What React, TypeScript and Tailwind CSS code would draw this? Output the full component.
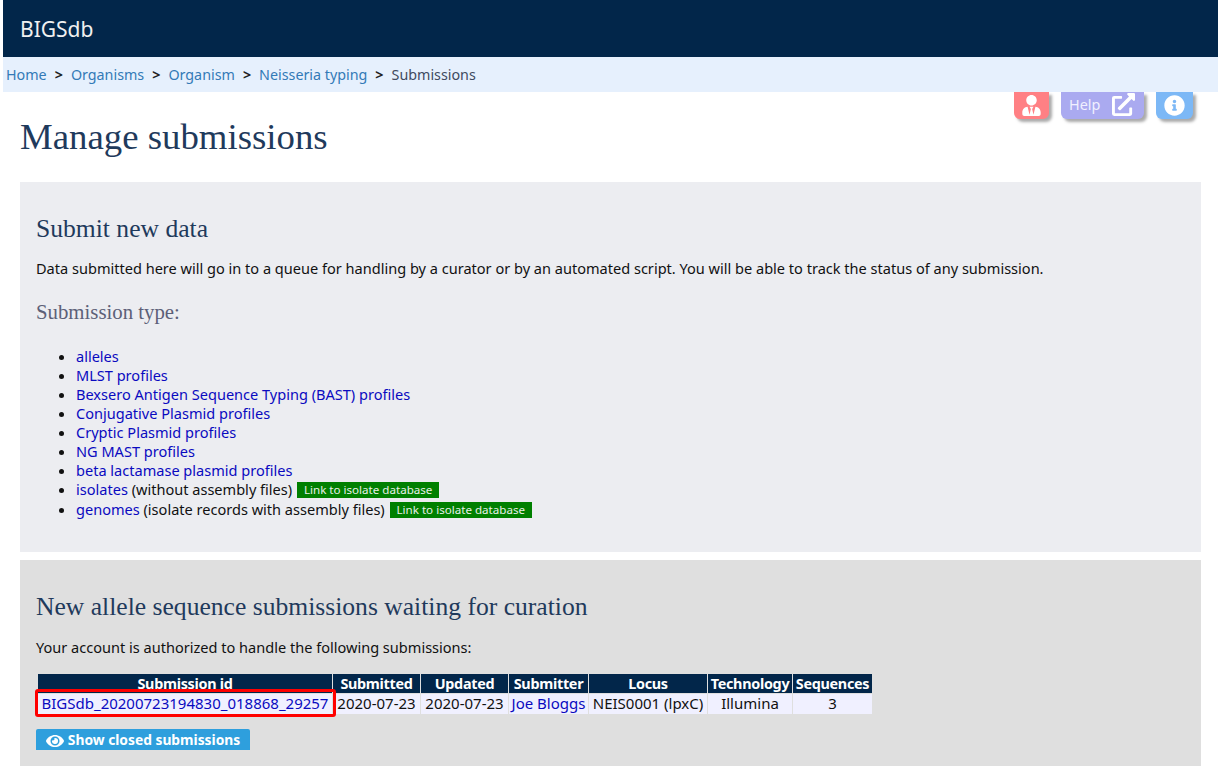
import { FaUserTie, FaExternalLinkAlt, FaInfoCircle, FaEye } from "react-icons/fa";

const types = [
  "alleles",
  "MLST profiles",
  "Bexsero Antigen Sequence Typing (BAST) profiles",
  "Conjugative Plasmid profiles",
  "Cryptic Plasmid profiles",
  "NG MAST profiles",
  "beta lactamase plasmid profiles",
];

const crumbs = ["Home", "Organisms", "Organism", "Neisseria typing"];

function IsolateLink() {
  return (
    <span className="ml-[1px] inline-block h-4 bg-[#008000] px-[7px] align-[1px] text-[11.6px] leading-4 text-[#e8f0e8]">
      Link to isolate database
    </span>
  );
}

export default function App() {
  return (
    <div className="relative h-[774px] overflow-hidden bg-white px-[3px] font-['Noto_Sans',sans-serif] text-[14.55px] text-[#111]">
      {/* Header */}
      <div className="flex h-[57px] items-center bg-[#02264a] pl-[17px] pt-[2px] text-[21px] text-[#f0f0f0]">BIGSdb</div>

      {/* Breadcrumb */}
      <div className="flex h-[35px] items-center gap-2 bg-[#e6f0fd] pl-[3px] text-[14.3px] text-[#404a60]">
        {crumbs.map((c) => (
          <span key={c} className="flex items-center gap-2">
            <a className="text-[#337ab7]">{c}</a>
            <b className="text-[#222]">&gt;</b>
          </span>
        ))}
        <span>Submissions</span>
      </div>

      {/* Floating buttons */}
      <div className="absolute left-[1014px] top-[92px] flex h-[27px] w-[35px] items-center justify-center rounded-b-md bg-[#ff8084] text-[21px] text-white shadow-[3px_3px_3px_#aaa]">
        <FaUserTie />
      </div>
      <div className="absolute left-[1061px] top-[92px] flex h-[27px] w-[83px] items-center gap-3 rounded-b-md bg-[#aaaaf0] pb-[2px] pl-2 text-[14.4px] text-[#f0f0ff] shadow-[3px_3px_3px_#aaa]">
        Help <FaExternalLinkAlt className="text-[23px] text-white" />
      </div>
      <div className="absolute left-[1156px] top-[92px] flex h-[27px] w-[37px] items-center justify-center rounded-b-md bg-[#7cb8f6] text-[21px] text-white shadow-[3px_3px_3px_#aaa]">
        <FaInfoCircle />
      </div>

      <div className="px-[17px]">
        <h1 className="mt-6 font-['Liberation_Serif',serif] text-[36.8px] leading-[42px] text-[#1f3a5c]">Manage submissions</h1>

        {/* Submit new data */}
        <section className="mt-6 h-[370px] bg-[#ecedf1] px-4 pt-[32px]">
          <h2 className="font-['Liberation_Serif',serif] text-[25.6px] leading-[30px] text-[#1f3a5c]">Submit new data</h2>
          <p className="mt-[14px] leading-5">
            Data submitted here will go in to a queue for handling by a curator or by an automated script. You will be able to track the status of any submission.
          </p>
          <h3 className="mt-[22px] font-['Liberation_Serif',serif] text-[20.8px] leading-6 text-[#5c6078]">Submission type:</h3>
          <ul className="mt-[23px] list-disc pl-10">
            {types.map((t) => (
              <li key={t} className="h-[19px] leading-[19px]">
                <a className="text-[#0a0ac0]">{t}</a>
              </li>
            ))}
            <li className="h-[20px] leading-[19px]">
              <a className="text-[#0a0ac0]">isolates</a> (without assembly files) <IsolateLink />
            </li>
            <li className="h-[19px] leading-[19px]">
              <a className="text-[#0a0ac0]">genomes</a> (isolate records with assembly files) <IsolateLink />
            </li>
          </ul>
        </section>

        {/* Curation queue */}
        <section className="mt-2 h-[206px] bg-[#dfdfdf] px-4 pt-[32px]">
          <h2 className="font-['Liberation_Serif',serif] text-[25.6px] leading-[30px] text-[#1f3a5c]">New allele sequence submissions waiting for curation</h2>
          <p className="mt-[15px] leading-5">Your account is authorized to handle the following submissions:</p>
          <div className="relative mt-[17px] ml-[2px] w-[834px]">
            <div className="grid grid-cols-[294px_87px_87px_79px_118px_84px_79px] gap-x-px gap-y-px text-center leading-[19px]">
              {["Submission id", "Submitted", "Updated", "Submitter", "Locus", "Technology", "Sequences"].map((h) => (
                <div key={h} className="h-[19px] whitespace-nowrap bg-[#02264a] text-[14.4px] font-bold tracking-[-0.3px] text-white">{h}</div>
              ))}
              <div className="h-5 whitespace-nowrap bg-[#f0f0ff] text-[15px] text-[#0a0ac0]">BIGSdb_20200723194830_018868_29257</div>
              <div className="h-5 whitespace-nowrap bg-[#f0f0ff] text-[15px]">2020-07-23</div>
              <div className="h-5 whitespace-nowrap bg-[#f0f0ff] text-[15px]">2020-07-23</div>
              <div className="h-5 whitespace-nowrap bg-[#f0f0ff] text-[15px] text-[#0a0ac0]">Joe Bloggs</div>
              <div className="h-5 whitespace-nowrap bg-[#f0f0ff] text-[15px]">NEIS0001 (lpxC)</div>
              <div className="h-5 whitespace-nowrap bg-[#f0f0ff] text-[15px]">Illumina</div>
              <div className="h-5 whitespace-nowrap bg-[#f0f0ff] text-[15px]">3</div>
            </div>
            <div className="absolute left-[-3px] top-[15px] h-[28px] w-[301px] rounded-[3px] border-[3px] border-[#ff0000]" />
          </div>
          <div className="mt-[15px] flex h-[21px] w-[214px] items-center justify-center gap-1 rounded-t-[2px] bg-[#2e9fdd] pt-[2px] text-[13.8px] font-bold text-white">
            <FaEye className="text-[18px]" /> Show closed submissions
          </div>
        </section>
      </div>
    </div>
  );
}
